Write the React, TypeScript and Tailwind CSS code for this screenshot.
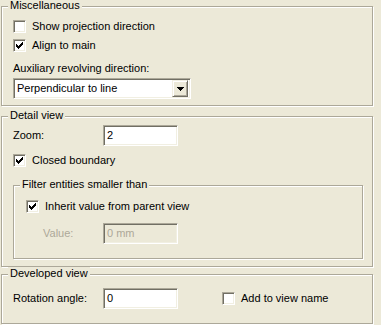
import React from 'react';

const font = { fontFamily: '"Liberation Sans", Arial, sans-serif' };

const CheckMark = () => (
  <svg width="7" height="7" viewBox="0 0 7 7" shapeRendering="crispEdges">
    <path
      d="M0 2h1v3h-1z M1 3h1v3h-1z M2 4h1v3h-1z M3 3h1v3h-1z M4 2h1v3h-1z M5 1h1v3h-1z M6 0h1v3h-1z"
      fill="#000"
    />
  </svg>
);

const CheckBox = ({ checked, label }: { checked?: boolean; label: string }) => (
  <div className="flex items-center gap-[6px] h-[13px]">
    <div className="w-[13px] h-[13px] bg-white border border-t-[#ACA899] border-l-[#ACA899] border-b-white border-r-white shadow-[inset_1px_1px_0_#716F64,inset_-1px_-1px_0_#F1EFE2] flex items-center justify-center">
      {checked && <CheckMark />}
    </div>
    <span className="text-[11px] leading-[13px] text-black">{label}</span>
  </div>
);

const TextBox = ({ value, disabled }: { value: string; disabled?: boolean }) => (
  <div
    className={
      'w-[75px] h-[21px] border border-t-[#ACA899] border-l-[#ACA899] border-b-white border-r-white shadow-[inset_1px_1px_0_#716F64,inset_-1px_-1px_0_#F1EFE2] px-[3px] flex items-center text-[11px] ' +
      (disabled ? 'bg-[#ECE9D8] text-[#ACA899]' : 'bg-white text-black')
    }
  >
    {value}
  </div>
);

const Group = ({
  title,
  className,
  children,
}: {
  title: string;
  className: string;
  children: React.ReactNode;
}) => (
  <div
    className={
      'relative border border-[#ACA899] shadow-[inset_1px_1px_0_#fff,1px_1px_0_#fff] ' + className
    }
  >
    <span className="absolute -top-[8px] left-[6px] bg-[#ECE9D8] px-[2px] text-[11px] leading-[13px] text-black">
      {title}
    </span>
    {children}
  </div>
);

export default function App() {
  return (
    <div className="w-[381px] h-[325px] bg-[#ECE9D8] pl-[1px] pt-[6px] overflow-hidden" style={font}>
      {/* Miscellaneous */}
      <Group title="Miscellaneous" className="w-[372px] h-[100px] pl-[11px] pt-[13px]">
        <div className="flex flex-col gap-[6px]">
          <CheckBox label="Show projection direction" />
          <CheckBox checked label="Align to main" />
        </div>
        <div className="mt-[10px] text-[11px] leading-[13px]">Auxiliary revolving direction:</div>
        <div className="mt-[3px] w-[178px] h-[21px] bg-white border border-t-[#ACA899] border-l-[#ACA899] border-b-white border-r-white shadow-[inset_1px_1px_0_#716F64,inset_-1px_-1px_0_#F1EFE2] flex items-center pl-[3px] pr-[2px]">
          <span className="flex-1 text-[11px]">Perpendicular to line</span>
          <div className="w-[16px] h-[17px] bg-[#ECE9D8] border border-t-[#F1EFE2] border-l-[#F1EFE2] border-b-[#716F64] border-r-[#716F64] shadow-[inset_1px_1px_0_#fff,inset_-1px_-1px_0_#ACA899] flex items-center justify-center">
            <svg width="7" height="4" viewBox="0 0 7 4" shapeRendering="crispEdges">
              <path d="M0 0h7v1h-7z M1 1h5v1h-5z M2 2h3v1h-3z M3 3h1v1h-1z" fill="#000" />
            </svg>
          </div>
        </div>
      </Group>

      {/* Detail view */}
      <Group title="Detail view" className="mt-[10px] w-[372px] h-[151px] pl-[11px] pt-[8px]">
        <div className="flex items-center">
          <span className="w-[90px] text-[11px]">Zoom:</span>
          <TextBox value="2" />
        </div>
        <div className="mt-[8px]">
          <CheckBox checked label="Closed boundary" />
        </div>
        <Group title="Filter entities smaller than" className="mt-[18px] w-[350px] h-[74px] pl-[12px] pt-[14px]">
          <CheckBox checked label="Inherit value from parent view" />
          <div className="mt-[10px] flex items-center pl-[17px]">
            <span className="w-[60px] text-[11px] text-[#ACA899]">Value:</span>
            <TextBox value="0 mm" disabled />
          </div>
        </Group>
      </Group>

      {/* Developed view */}
      <Group title="Developed view" className="mt-[7px] w-[372px] h-[50px] pl-[11px] pt-[13px]">
        <div className="flex items-center">
          <span className="w-[90px] text-[11px]">Rotation angle:</span>
          <TextBox value="0" />
          <div className="ml-[44px]">
            <CheckBox label="Add to view name" />
          </div>
        </div>
      </Group>
    </div>
  );
}
